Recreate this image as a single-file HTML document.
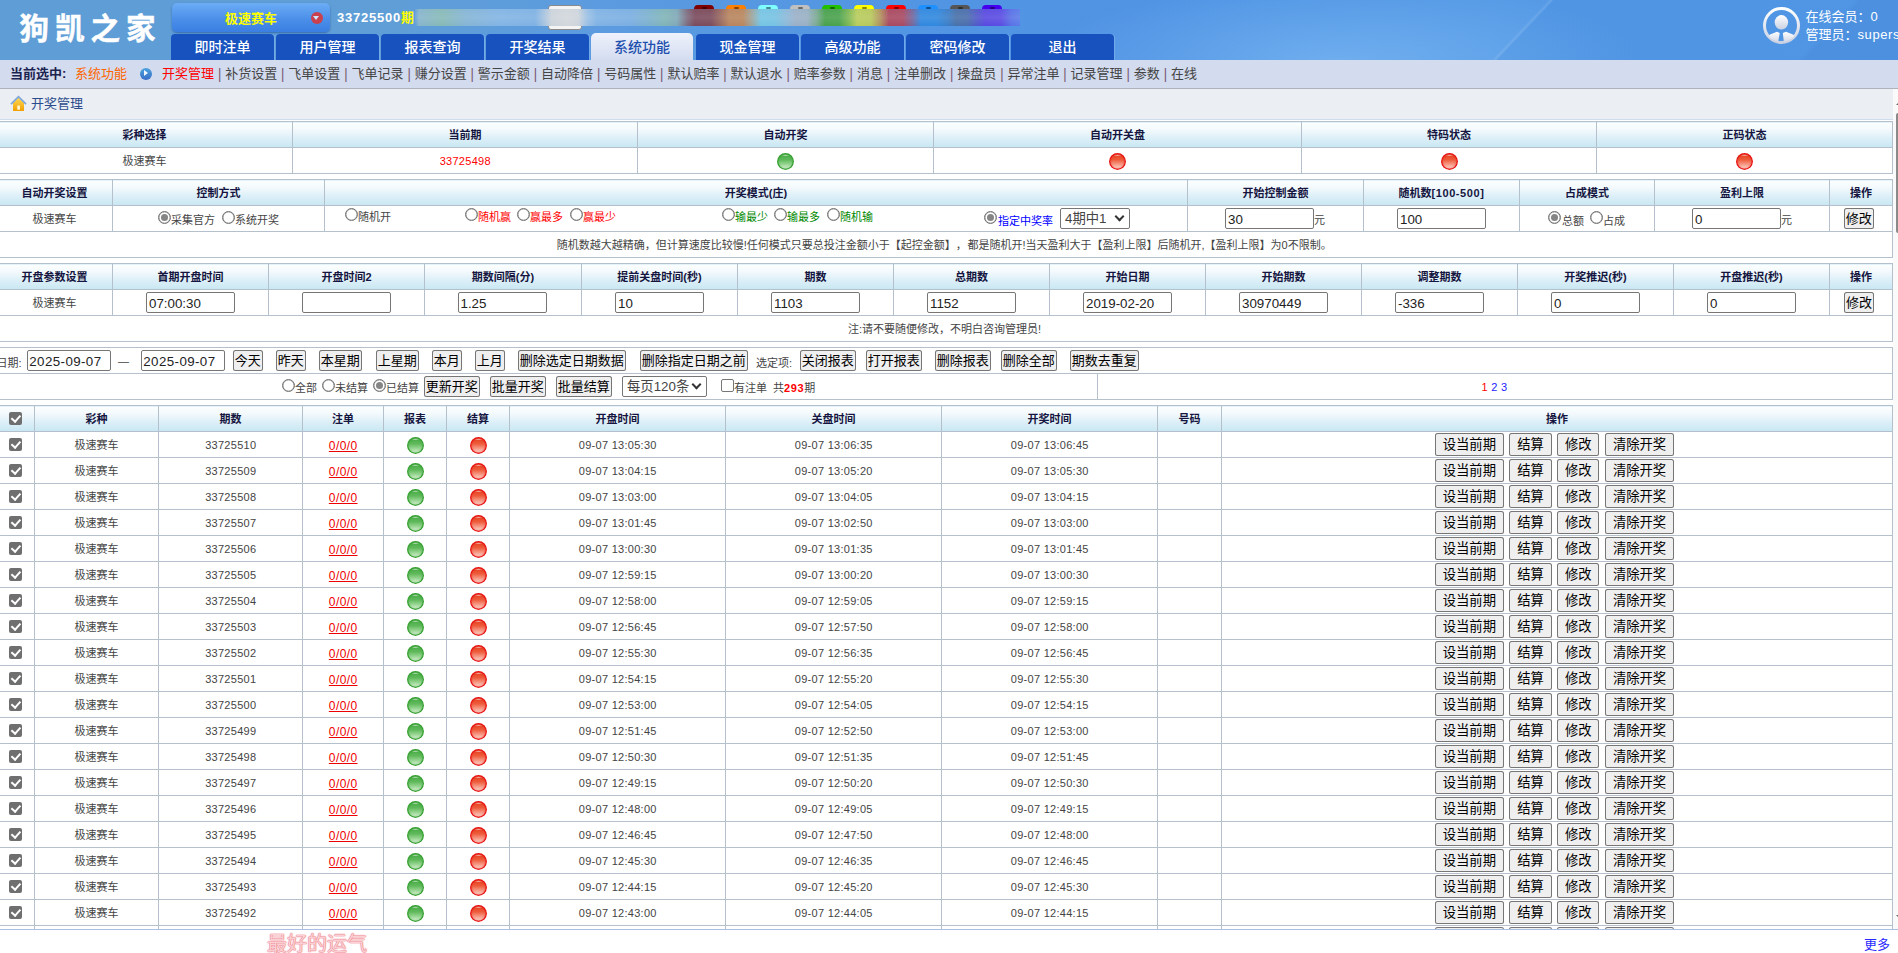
<!DOCTYPE html>
<html lang="zh-CN"><head><meta charset="utf-8"><title>开奖管理</title>
<style>
*{box-sizing:border-box}
html,body{margin:0;padding:0}
body{width:1898px;height:953px;overflow:hidden;position:relative;background:#fff;
 font-family:"Liberation Sans","Noto Sans CJK SC",sans-serif;font-size:11px;color:#444;text-spacing-trim:space-all}
.abs{position:absolute}
/* ---------- header ---------- */
#hdr{position:absolute;left:0;top:0;width:1898px;height:60px;overflow:hidden;
 background:
  linear-gradient(133.5deg,rgba(255,255,255,0) 0,rgba(255,255,255,.03) 1123px,rgba(255,255,255,.13) 1125.5px,rgba(0,40,120,.02) 1127.5px,rgba(0,40,120,.02) 1345px,rgba(0,40,140,.07) 1350px,rgba(0,40,140,.07) 100%),
  radial-gradient(ellipse 300px 80px at 1340px 62px,rgba(135,195,248,.5),rgba(135,195,248,0)),
  linear-gradient(90deg,#5e9dd6 0,#5e9dd6 380px,#5a9adf 600px,#5094e2 850px,#4c91e3 1150px,#5197e5 1500px,#5298e6 1898px)}
#logo{position:absolute;left:19.5px;top:9px;font-size:29.5px;line-height:40px;font-weight:700;color:#fff;letter-spacing:6px;-webkit-text-stroke:.5px #fff;white-space:nowrap}
#gsel{position:absolute;left:172px;top:3px;width:158px;height:29px;border-radius:5px;
 background:linear-gradient(#6cadf5,#4b8fe9 55%,#3a7fe2);box-shadow:0 1px 2px rgba(0,40,120,.45)}
#gsel b{position:absolute;left:53px;top:6.5px;font-size:13px;line-height:18px;color:#ff0;font-weight:bold;white-space:nowrap}
#gsel i{position:absolute;left:139px;top:8.5px;width:12px;height:12px;border-radius:50%;background:#c9404f}
#gsel i:after{content:"";position:absolute;left:2.3px;top:4.3px;border:3.7px solid transparent;border-top:4.4px solid #cfe6ff;border-bottom:0}
#qi{position:absolute;left:337px;top:9.3px;font-size:13px;line-height:18px;font-weight:bold;color:#fff;white-space:nowrap;letter-spacing:.77px}
#qi span{color:#ff0}
.tab{position:absolute;top:34px;width:103px;height:26px;background:#1752bf;border-radius:4px 4px 0 0;color:#fff;font-size:14px;line-height:27px;text-align:center;font-weight:500;
 box-shadow:1px 0 0 rgba(120,175,235,.8)}
.tab.on{background:linear-gradient(#eef2fc,#d4dcf0);color:#1c4fae;top:33px;height:27px;width:102px;line-height:29px;border-radius:5px 5px 0 0;box-shadow:none}
#usr{position:absolute;left:1805.5px;top:7.6px;color:#fff;font-size:13px;line-height:18px;white-space:nowrap}
/* ---------- subnav ---------- */
#sub{position:absolute;left:0;top:60px;width:1898px;height:29px;background:#d3dbee;border-bottom:1px solid #aeb2ba;font-size:13px;line-height:28px;color:#444;white-space:nowrap}
#sub .cur{position:absolute;left:10px;top:0;font-weight:bold;color:#1b2350}
#sub .cur em{font-style:normal;color:#f60;font-weight:normal;position:absolute;left:65px;top:0}
#sub .arw{position:absolute;left:139.5px;top:7.8px;width:12px;height:12px;border-radius:50%;background:linear-gradient(#4ba2de,#3a6ec6)}
#sub .arw:after{content:"";position:absolute;left:4.6px;top:2.3px;border:3.7px solid transparent;border-left:4.6px solid #f4f8ff;border-right:0}
#sub .lnk{position:absolute;left:162px;top:0}
#sub .lnk b{color:#f00;font-weight:normal}
#sub .lnk s{text-decoration:none;color:#76566e;display:inline-block;width:11.17px;text-align:center;transform:scaleY(1.16)}
/* ---------- content ---------- */
#tbar{position:absolute;left:0;top:89px;width:1893px;height:31px;background:#ebeef2;border-bottom:1px solid #cfdcf0}
#tbar span{position:absolute;left:31px;top:6px;font-size:13px;line-height:18px;color:#2b4c8c}
#tbar svg{position:absolute;left:10px;top:6px}
table{border-collapse:collapse;table-layout:fixed;position:absolute;left:-4px}
td,th{border:1px solid #b5c0cd;padding:0;text-align:center;vertical-align:middle;height:26px;overflow:hidden;white-space:nowrap;font-size:11px;line-height:14px;font-weight:normal;color:#444}
th{background:linear-gradient(#fcfefe 0,#f2f9fc 30%,#def0f8 60%,#c8e7f3 100%);font-weight:bold;color:#15153f}
.n{letter-spacing:.28px;padding-left:.5px}
.red{color:#f00}
/* form controls */
.inp{display:inline-block;width:89px;height:21px;border:1px solid #767676;border-radius:2px;background:#fff;font-size:13.33px;line-height:19px;text-align:left;padding:1px 0 0 2px;color:#222;vertical-align:middle}
.btn,button{display:inline-block;font-family:inherit;font-size:13px;line-height:20px;height:21px;padding:1px 0 0;border:0;box-shadow:inset 0 0 0 1px #767676;border-radius:2.5px;background:#efefef;color:#000;vertical-align:middle;margin:0;white-space:nowrap;text-align:center}
.sel{display:inline-block;position:relative;height:21px;border:1px solid #767676;border-radius:2px;background:#fff;font-size:13.33px;line-height:19px;text-align:left;padding-left:4px;color:#444;vertical-align:middle}
.sel:after{content:"";position:absolute;right:6px;top:4px;width:5px;height:5px;border-right:2px solid #333;border-bottom:2px solid #333;transform:rotate(45deg)}
.rd{display:inline-block;width:13px;height:13px;border:1px solid #707070;box-shadow:inset 0 0 0 .35px #767676;border-radius:50%;background:#fff;vertical-align:middle;position:relative}
.rd.on:after{content:"";position:absolute;left:2px;top:2px;width:7px;height:7px;border-radius:50%;background:#858585}
.cb{display:inline-block;width:13px;height:13px;border-radius:2px;background:#6f6f6f;vertical-align:middle;position:relative;top:-1px}
.cb:after{content:"";position:absolute;left:4px;top:1.5px;width:3.5px;height:7px;border:solid #fff;border-width:0 2px 2px 0;transform:rotate(42deg)}
.cb.off{background:#fff;border:1px solid #767676}
.cb.off:after{display:none}
.ball{display:inline-block;width:17px;height:17px;border-radius:50%;vertical-align:middle;position:relative;top:1.2px}
.ball.g{background:radial-gradient(ellipse 4.5px 1.2px at 50% 13%,rgba(255,255,255,.75),rgba(255,255,255,0)),linear-gradient(#4aad47 8%,#5fb95b 40%,#9ad795 68%,#e2f5de 94%);box-shadow:inset 0 0 0 1.2px #37a032,inset 0 0 2px 1.5px rgba(55,160,50,.55)}
.ball.r{background:radial-gradient(ellipse 4.5px 1.2px at 50% 13%,rgba(255,255,255,.75),rgba(255,255,255,0)),linear-gradient(#e6431f 8%,#ee5c3c 40%,#f79c88 68%,#fde2da 94%);box-shadow:inset 0 0 0 1.2px #e81212,inset 0 0 2px 1.5px rgba(232,18,18,.55)}
.pos{position:absolute;white-space:nowrap}
/* data table */
#t5 td{height:26px}
#t5 .op{padding-right:5.2px}
#t5 .op button{height:23px;line-height:22px;padding:0;font-size:13.33px;margin:0 0 0 5.3px;width:42.4px}
#t5 .op button:first-child{width:69.6px;margin-left:0}
#t5 .op button:last-child{width:69.5px}
.zd{color:#e00;text-decoration:underline;font-size:12px;letter-spacing:.4px;position:relative;top:1.2px;left:.2px}
#foot{position:absolute;left:0;top:929px;width:1898px;height:24px;background:#fff;border-top:1px solid #aabfe4}
#foot .luck{position:absolute;left:267px;top:2px;font-size:20px;line-height:24px;color:#fad0d4;white-space:nowrap;text-shadow:0 0 1px #ec7482,0 0 1px #ec7482,0 0 1.5px #f09aa4}
#foot .more{position:absolute;left:1864px;top:6.3px;font-size:13px;line-height:18px;color:#2a2aff}
#sb{position:absolute;left:1893px;top:89px;width:5px;height:841px;background:#fafafa}
#sb i{position:absolute;left:3px;top:24px;width:4px;height:120px;background:#8a8a8a;border-radius:3px}
#sb:before{content:"";position:absolute;left:2.5px;top:12px;border:4px solid transparent;border-bottom:4px solid #666;border-top:0}
#sb:after{content:"";position:absolute;left:2.5px;top:826px;border:4px solid transparent;border-top:4px solid #666;border-bottom:0}

#blur{position:absolute;left:415px;top:9px;width:605px;height:17px;background:linear-gradient(rgba(255,255,255,.04),rgba(255,255,255,.1) 50%,rgba(255,255,255,0)),linear-gradient(90deg,rgba(120,170,215,0) 0px,#86b4cc 4px,#86b9b6 27px,#84b4d4 50px,#82b4e4 85px,#7eb1e3 120px,#a0c0e0 128px,#ccd3da 137px,#d2d7dc 152px,#cdd4db 163px,#9cc0e4 172px,#7fb2e4 182px,#7aaee2 215px,#7cb1cc 235px,#80b4b6 250px,#7fa8b8 262px,#7c6c80 272px,#7a4a5c 280px,#7c4c5c 296px,#9a6a5e 306px,#b8845e 314px,#b8865e 328px,#98a8a4 338px,#74c4e4 346px,#76c2e2 360px,#8cb8d8 372px,#9ab0c8 380px,#98b0c4 392px,#78a890 402px,#48a04c 410px,#4aa24e 424px,#80b854 434px,#b8cc5c 442px,#b6c85c 456px,#b08c5c 466px,#a84860 474px,#a84a62 488px,#7068a0 498px,#3088e0 506px,#3088de 522px,#3c7cc4 534px,#4870a8 541px,#4a6eac 552px,#5058c8 562px,#5848e0 570px,#5a4ce2 586px,#5870e6 596px,#5a7ce8 605px)}
.ct{position:absolute;top:5px;width:20px;height:10px;border-radius:4px 4px 0 0}
.ct:after{content:"";position:absolute;left:8px;top:2px;width:5px;height:2px;background:rgba(0,0,0,.45);border-radius:1px}
#wb{position:absolute;left:548px;top:5px;width:34px;height:25px;border:1px solid #8a8a8a;border-radius:3px;background:#f4f4f4}

</style></head>
<body>
<div id="hdr">
 <div id="logo">狗凯之家</div>
 <i id="wb"></i><i class="ct" style="left:693.5px;background:#800000"></i><i class="ct" style="left:725.5px;background:#ff7f00"></i><i class="ct" style="left:757.5px;background:#7fffff"></i><i class="ct" style="left:789.5px;background:#c0c0c0"></i><i class="ct" style="left:821.5px;background:#22c000"></i><i class="ct" style="left:853.5px;background:#ffff00"></i><i class="ct" style="left:885.5px;background:#ff0000"></i><i class="ct" style="left:917.5px;background:#1e90ff"></i><i class="ct" style="left:949.5px;background:#555555"></i><i class="ct" style="left:981.5px;background:#4400ee"></i>
 <div id="blur"></div>
 <div id="gsel"><b>极速赛车</b><i></i></div>
 <div id="qi">33725500<span>期</span></div>
 <div class="tab" style="left:171px">即时注单</div>
 <div class="tab" style="left:276px">用户管理</div>
 <div class="tab" style="left:381px">报表查询</div>
 <div class="tab" style="left:486px">开奖结果</div>
 <div class="tab on" style="left:591px">系统功能</div>
 <div class="tab" style="left:696px">现金管理</div>
 <div class="tab" style="left:801px">高级功能</div>
 <div class="tab" style="left:906px">密码修改</div>
 <div class="tab" style="left:1011px">退出</div>
 <svg id="ava" class="abs" style="left:1762px;top:6px" width="39" height="39" viewBox="0 0 39 39">
  <defs><linearGradient id="ag" x1="0" y1="0" x2="0" y2="1"><stop offset="0" stop-color="#fff"/><stop offset="1" stop-color="#c9d0e2"/></linearGradient>
  <clipPath id="ac"><circle cx="19.5" cy="19.5" r="16.5"/></clipPath></defs>
  <circle cx="19.5" cy="19.5" r="17" fill="none" stroke="url(#ag)" stroke-width="3"/>
  <ellipse cx="19.4" cy="16.3" rx="6.7" ry="7.2" fill="url(#ag)"/>
  <g clip-path="url(#ac)"><path d="M3 38 L5 31 L8 28.5 L15 25.8 L17.8 27 L15.7 38 Z M36 38 L34 31 L31 28.5 L24 25.8 L20.8 27 L22.1 38 Z" fill="url(#ag)"/></g>
 </svg>
 <div id="usr">在线会员：0<br>管理员：<span style="letter-spacing:.6px">supers</span></div>
</div>
<div id="sub">
 <span class="cur">当前选中:<em>系统功能</em></span>
 <i class="arw"></i>
 <span class="lnk"><b>开奖管理</b><s>|</s>补货设置<s>|</s>飞单设置<s>|</s>飞单记录<s>|</s>赚分设置<s>|</s>警示金额<s>|</s>自动降倍<s>|</s>号码属性<s>|</s>默认赔率<s>|</s>默认退水<s>|</s>赔率参数<s>|</s>消息<s>|</s>注单删改<s>|</s>操盘员<s>|</s>异常注单<s>|</s>记录管理<s>|</s>参数<s>|</s>在线</span>
</div>
<div id="tbar">
 <svg width="17" height="17" viewBox="0 0 17 17">
  <defs><linearGradient id="hg" x1="0" y1="0" x2="0" y2="1"><stop offset="0" stop-color="#ffd95a"/><stop offset="1" stop-color="#f0a000"/></linearGradient></defs>
  <path d="M3 8 L8.5 2.5 L14 8 L14 16 L3 16 Z" fill="url(#hg)"/>
  <path d="M1 9.2 L8.5 1.6 L16 9.2" fill="none" stroke="#7fa7d8" stroke-width="1.7" stroke-linejoin="miter"/>
  <rect x="7.3" y="10.5" width="2.6" height="4.2" fill="#fff7d8"/>
 </svg>
 <span>开奖管理</span>
</div>

<table id="t1" style="top:121px;width:1896px">
 <colgroup><col style="width:296px"><col style="width:345px"><col style="width:296px"><col style="width:368px"><col style="width:295px"><col style="width:296px"></colgroup>
 <tr><th>彩种选择</th><th>当前期</th><th>自动开奖</th><th>自动开关盘</th><th>特码状态</th><th>正码状态</th></tr>
 <tr><td>极速赛车</td><td class="red n">33725498</td><td><i class="ball g"></i></td><td><i class="ball r"></i></td><td><i class="ball r"></i></td><td><i class="ball r"></i></td></tr>
</table>

<table id="t2" style="top:179px;width:1896px">
 <colgroup><col style="width:116px"><col style="width:212px"><col style="width:863px"><col style="width:176px"><col style="width:156px"><col style="width:135px"><col style="width:175px"><col style="width:63px"></colgroup>
 <tr><th>自动开奖设置</th><th>控制方式</th><th>开奖模式(庄)</th><th>开始控制金额</th><th>随机数<span style="letter-spacing:.6px">[100-500]</span></th><th>占成模式</th><th>盈利上限</th><th>操作</th></tr>
 <tr><td>极速赛车</td><td></td><td></td><td></td><td></td><td></td><td></td><td></td></tr>
 <tr><td colspan="8" style="text-align:left"><span style="position:relative;left:559.8px">随机数越大越精确，但计算速度比较慢!任何模式只要总投注金额小于【起控金额】，<i style="margin-left:.6px"></i>都是随机开!当天盈利大于【盈利上限】后随机开,【盈利上限】为0不限制。</span></td></tr>
</table>
<!-- t2 controls -->
<i class="rd on pos" style="left:158px;top:211px"></i><span class="pos" style="left:171px;top:211px">采集官方</span>
<i class="rd pos" style="left:222px;top:211px"></i><span class="pos" style="left:235px;top:211px">系统开奖</span>
<i class="rd pos" style="left:345px;top:208px"></i><span class="pos" style="left:358px;top:208px">随机开</span>
<i class="rd pos" style="left:465px;top:208px"></i><span class="pos red" style="left:478px;top:208px">随机赢</span>
<i class="rd pos" style="left:517px;top:208px"></i><span class="pos red" style="left:530px;top:208px">赢最多</span>
<i class="rd pos" style="left:570px;top:208px"></i><span class="pos red" style="left:583px;top:208px">赢最少</span>
<i class="rd pos" style="left:722px;top:208px"></i><span class="pos" style="left:735px;top:208px;color:#080">输最少</span>
<i class="rd pos" style="left:774px;top:208px"></i><span class="pos" style="left:787px;top:208px;color:#080">输最多</span>
<i class="rd pos" style="left:827px;top:208px"></i><span class="pos" style="left:840px;top:208px;color:#080">随机输</span>
<i class="rd on pos" style="left:984px;top:211px"></i><span class="pos" style="left:998px;top:212px;color:#00f">指定中奖率</span>
<span class="sel pos" style="left:1060px;top:208px;width:70px">4期中1</span>
<span class="inp pos" style="left:1225px;top:208px">30</span><span class="pos" style="left:1314px;top:211px">元</span>
<span class="inp pos" style="left:1397px;top:208px">100</span>
<i class="rd on pos" style="left:1548px;top:211px"></i><span class="pos" style="left:1562px;top:212px">总额</span>
<i class="rd pos" style="left:1590px;top:211px"></i><span class="pos" style="left:1603px;top:212px">占成</span>
<span class="inp pos" style="left:1692px;top:208px">0</span><span class="pos" style="left:1781px;top:211px">元</span>
<span class="btn pos" style="left:1844px;top:208px;width:29.5px">修改</span>

<table id="t3" style="top:263px;width:1896px">
 <colgroup><col style="width:116px"><col style="width:156px"><col style="width:156px"><col style="width:157px"><col style="width:156px"><col style="width:156px"><col style="width:156px"><col style="width:156px"><col style="width:156px"><col style="width:156px"><col style="width:156px"><col style="width:156px"><col style="width:63px"></colgroup>
 <tr><th>开盘参数设置</th><th>首期开盘时间</th><th>开盘时间2</th><th>期数间隔(分)</th><th>提前关盘时间(秒)</th><th>期数</th><th>总期数</th><th>开始日期</th><th>开始期数</th><th>调整期数</th><th>开奖推迟(秒)</th><th>开盘推迟(秒)</th><th>操作</th></tr>
 <tr><td>极速赛车</td><td><span class="inp">07:00:30</span></td><td><span class="inp">&nbsp;</span></td><td style="padding-right:2px"><span class="inp">1.25</span></td><td><span class="inp">10</span></td><td><span class="inp">1103</span></td><td><span class="inp">1152</span></td><td><span class="inp">2019-02-20</span></td><td><span class="inp">30970449</span></td><td><span class="inp">-336</span></td><td><span class="inp">0</span></td><td><span class="inp">0</span></td><td style="padding-right:4px"><span class="btn" style="width:29.5px">修改</span></td></tr>
 <tr><td colspan="13">注:请不要随便修改，不明白咨询管理员!</td></tr>
</table>

<table id="t4" style="top:347px;width:1896px">
 <colgroup><col style="width:1101px"><col style="width:795px"></colgroup>
 <tr><td colspan="2"></td></tr>
 <tr><td></td><td></td></tr>
</table>
<!-- t4 controls -->
<span class="pos" style="left:-3.5px;top:354px">日期:</span>
<span class="inp pos" style="left:27px;top:350px;width:84px;letter-spacing:.4px;padding-left:1.3px">2025-09-07</span>
<span class="pos" style="left:118px;top:355px">—</span>
<span class="inp pos" style="left:141px;top:350px;width:84px;letter-spacing:.4px;padding-left:1.3px">2025-09-07</span>
<span class="btn pos" style="left:233px;top:350px;width:29.5px">今天</span>
<span class="btn pos" style="left:276px;top:350px;width:29.5px">昨天</span>
<span class="btn pos" style="left:319px;top:350px;width:42.5px">本星期</span>
<span class="btn pos" style="left:376px;top:350px;width:42.5px">上星期</span>
<span class="btn pos" style="left:432px;top:350px;width:29.5px">本月</span>
<span class="btn pos" style="left:475px;top:350px;width:29.5px">上月</span>
<span class="btn pos" style="left:518px;top:350px;width:107.5px">删除选定日期数据</span>
<span class="btn pos" style="left:640px;top:350px;width:107.5px">删除指定日期之前</span>
<span class="pos" style="left:756px;top:353.5px">选定项:</span>
<span class="btn pos" style="left:800px;top:350px;width:55.5px">关闭报表</span>
<span class="btn pos" style="left:866px;top:350px;width:55.5px">打开报表</span>
<span class="btn pos" style="left:935px;top:350px;width:55.5px">删除报表</span>
<span class="btn pos" style="left:1001px;top:350px;width:55.5px">删除全部</span>
<span class="btn pos" style="left:1070px;top:350px;width:68.5px">期数去重复</span>

<i class="rd pos" style="left:282px;top:379px"></i><span class="pos" style="left:295px;top:379px">全部</span>
<i class="rd pos" style="left:322px;top:379px"></i><span class="pos" style="left:335px;top:379px">未结算</span>
<i class="rd on pos" style="left:373px;top:379px"></i><span class="pos" style="left:386px;top:379px">已结算</span>
<span class="btn pos" style="left:424px;top:376px;width:55.5px">更新开奖</span>
<span class="btn pos" style="left:490px;top:376px;width:55.5px">批量开奖</span>
<span class="btn pos" style="left:556px;top:376px;width:55.5px">批量结算</span>
<span class="sel pos" style="left:622px;top:376px;width:84.5px">每页120条</span>
<i class="cb off pos" style="left:721px;top:379px"></i><span class="pos" style="left:734px;top:379px">有注单</span>
<span class="pos" style="left:773px;top:379px">共<b class="red" style="letter-spacing:.6px">293</b>期</span>
<span class="pos n" style="left:1481px;top:380.6px"><span class="red">1</span> <span style="color:#22f">2</span> <span style="color:#22f">3</span></span>

<div id="frame" style="position:absolute;left:0;top:405px;width:1893px;height:524px;overflow:hidden">
<table id="t5" style="top:0;width:1896px">
 <colgroup><col style="width:38px"><col style="width:124px"><col style="width:144px"><col style="width:81px"><col style="width:63px"><col style="width:63px"><col style="width:216px"><col style="width:216px"><col style="width:216px"><col style="width:64px"><col style="width:671px"></colgroup>
 <tr><th><i class="cb"></i></th><th>彩种</th><th>期数</th><th>注单</th><th>报表</th><th>结算</th><th>开盘时间</th><th>关盘时间</th><th>开奖时间</th><th>号码</th><th>操作</th></tr>
<tr><td><i class="cb"></i></td><td>极速赛车</td><td class="n">33725510</td><td><a class="zd">0/0/0</a></td><td><i class="ball g"></i></td><td><i class="ball r"></i></td><td class="n">09-07 13:05:30</td><td class="n">09-07 13:06:35</td><td class="n">09-07 13:06:45</td><td></td><td class="op"><button>设当前期</button><button>结算</button><button>修改</button><button>清除开奖</button></td></tr>
<tr><td><i class="cb"></i></td><td>极速赛车</td><td class="n">33725509</td><td><a class="zd">0/0/0</a></td><td><i class="ball g"></i></td><td><i class="ball r"></i></td><td class="n">09-07 13:04:15</td><td class="n">09-07 13:05:20</td><td class="n">09-07 13:05:30</td><td></td><td class="op"><button>设当前期</button><button>结算</button><button>修改</button><button>清除开奖</button></td></tr>
<tr><td><i class="cb"></i></td><td>极速赛车</td><td class="n">33725508</td><td><a class="zd">0/0/0</a></td><td><i class="ball g"></i></td><td><i class="ball r"></i></td><td class="n">09-07 13:03:00</td><td class="n">09-07 13:04:05</td><td class="n">09-07 13:04:15</td><td></td><td class="op"><button>设当前期</button><button>结算</button><button>修改</button><button>清除开奖</button></td></tr>
<tr><td><i class="cb"></i></td><td>极速赛车</td><td class="n">33725507</td><td><a class="zd">0/0/0</a></td><td><i class="ball g"></i></td><td><i class="ball r"></i></td><td class="n">09-07 13:01:45</td><td class="n">09-07 13:02:50</td><td class="n">09-07 13:03:00</td><td></td><td class="op"><button>设当前期</button><button>结算</button><button>修改</button><button>清除开奖</button></td></tr>
<tr><td><i class="cb"></i></td><td>极速赛车</td><td class="n">33725506</td><td><a class="zd">0/0/0</a></td><td><i class="ball g"></i></td><td><i class="ball r"></i></td><td class="n">09-07 13:00:30</td><td class="n">09-07 13:01:35</td><td class="n">09-07 13:01:45</td><td></td><td class="op"><button>设当前期</button><button>结算</button><button>修改</button><button>清除开奖</button></td></tr>
<tr><td><i class="cb"></i></td><td>极速赛车</td><td class="n">33725505</td><td><a class="zd">0/0/0</a></td><td><i class="ball g"></i></td><td><i class="ball r"></i></td><td class="n">09-07 12:59:15</td><td class="n">09-07 13:00:20</td><td class="n">09-07 13:00:30</td><td></td><td class="op"><button>设当前期</button><button>结算</button><button>修改</button><button>清除开奖</button></td></tr>
<tr><td><i class="cb"></i></td><td>极速赛车</td><td class="n">33725504</td><td><a class="zd">0/0/0</a></td><td><i class="ball g"></i></td><td><i class="ball r"></i></td><td class="n">09-07 12:58:00</td><td class="n">09-07 12:59:05</td><td class="n">09-07 12:59:15</td><td></td><td class="op"><button>设当前期</button><button>结算</button><button>修改</button><button>清除开奖</button></td></tr>
<tr><td><i class="cb"></i></td><td>极速赛车</td><td class="n">33725503</td><td><a class="zd">0/0/0</a></td><td><i class="ball g"></i></td><td><i class="ball r"></i></td><td class="n">09-07 12:56:45</td><td class="n">09-07 12:57:50</td><td class="n">09-07 12:58:00</td><td></td><td class="op"><button>设当前期</button><button>结算</button><button>修改</button><button>清除开奖</button></td></tr>
<tr><td><i class="cb"></i></td><td>极速赛车</td><td class="n">33725502</td><td><a class="zd">0/0/0</a></td><td><i class="ball g"></i></td><td><i class="ball r"></i></td><td class="n">09-07 12:55:30</td><td class="n">09-07 12:56:35</td><td class="n">09-07 12:56:45</td><td></td><td class="op"><button>设当前期</button><button>结算</button><button>修改</button><button>清除开奖</button></td></tr>
<tr><td><i class="cb"></i></td><td>极速赛车</td><td class="n">33725501</td><td><a class="zd">0/0/0</a></td><td><i class="ball g"></i></td><td><i class="ball r"></i></td><td class="n">09-07 12:54:15</td><td class="n">09-07 12:55:20</td><td class="n">09-07 12:55:30</td><td></td><td class="op"><button>设当前期</button><button>结算</button><button>修改</button><button>清除开奖</button></td></tr>
<tr><td><i class="cb"></i></td><td>极速赛车</td><td class="n">33725500</td><td><a class="zd">0/0/0</a></td><td><i class="ball g"></i></td><td><i class="ball r"></i></td><td class="n">09-07 12:53:00</td><td class="n">09-07 12:54:05</td><td class="n">09-07 12:54:15</td><td></td><td class="op"><button>设当前期</button><button>结算</button><button>修改</button><button>清除开奖</button></td></tr>
<tr><td><i class="cb"></i></td><td>极速赛车</td><td class="n">33725499</td><td><a class="zd">0/0/0</a></td><td><i class="ball g"></i></td><td><i class="ball r"></i></td><td class="n">09-07 12:51:45</td><td class="n">09-07 12:52:50</td><td class="n">09-07 12:53:00</td><td></td><td class="op"><button>设当前期</button><button>结算</button><button>修改</button><button>清除开奖</button></td></tr>
<tr><td><i class="cb"></i></td><td>极速赛车</td><td class="n">33725498</td><td><a class="zd">0/0/0</a></td><td><i class="ball g"></i></td><td><i class="ball r"></i></td><td class="n">09-07 12:50:30</td><td class="n">09-07 12:51:35</td><td class="n">09-07 12:51:45</td><td></td><td class="op"><button>设当前期</button><button>结算</button><button>修改</button><button>清除开奖</button></td></tr>
<tr><td><i class="cb"></i></td><td>极速赛车</td><td class="n">33725497</td><td><a class="zd">0/0/0</a></td><td><i class="ball g"></i></td><td><i class="ball r"></i></td><td class="n">09-07 12:49:15</td><td class="n">09-07 12:50:20</td><td class="n">09-07 12:50:30</td><td></td><td class="op"><button>设当前期</button><button>结算</button><button>修改</button><button>清除开奖</button></td></tr>
<tr><td><i class="cb"></i></td><td>极速赛车</td><td class="n">33725496</td><td><a class="zd">0/0/0</a></td><td><i class="ball g"></i></td><td><i class="ball r"></i></td><td class="n">09-07 12:48:00</td><td class="n">09-07 12:49:05</td><td class="n">09-07 12:49:15</td><td></td><td class="op"><button>设当前期</button><button>结算</button><button>修改</button><button>清除开奖</button></td></tr>
<tr><td><i class="cb"></i></td><td>极速赛车</td><td class="n">33725495</td><td><a class="zd">0/0/0</a></td><td><i class="ball g"></i></td><td><i class="ball r"></i></td><td class="n">09-07 12:46:45</td><td class="n">09-07 12:47:50</td><td class="n">09-07 12:48:00</td><td></td><td class="op"><button>设当前期</button><button>结算</button><button>修改</button><button>清除开奖</button></td></tr>
<tr><td><i class="cb"></i></td><td>极速赛车</td><td class="n">33725494</td><td><a class="zd">0/0/0</a></td><td><i class="ball g"></i></td><td><i class="ball r"></i></td><td class="n">09-07 12:45:30</td><td class="n">09-07 12:46:35</td><td class="n">09-07 12:46:45</td><td></td><td class="op"><button>设当前期</button><button>结算</button><button>修改</button><button>清除开奖</button></td></tr>
<tr><td><i class="cb"></i></td><td>极速赛车</td><td class="n">33725493</td><td><a class="zd">0/0/0</a></td><td><i class="ball g"></i></td><td><i class="ball r"></i></td><td class="n">09-07 12:44:15</td><td class="n">09-07 12:45:20</td><td class="n">09-07 12:45:30</td><td></td><td class="op"><button>设当前期</button><button>结算</button><button>修改</button><button>清除开奖</button></td></tr>
<tr><td><i class="cb"></i></td><td>极速赛车</td><td class="n">33725492</td><td><a class="zd">0/0/0</a></td><td><i class="ball g"></i></td><td><i class="ball r"></i></td><td class="n">09-07 12:43:00</td><td class="n">09-07 12:44:05</td><td class="n">09-07 12:44:15</td><td></td><td class="op"><button>设当前期</button><button>结算</button><button>修改</button><button>清除开奖</button></td></tr>
<tr><td><i class="cb"></i></td><td>极速赛车</td><td class="n">33725491</td><td><a class="zd">0/0/0</a></td><td><i class="ball g"></i></td><td><i class="ball r"></i></td><td class="n">09-07 12:41:45</td><td class="n">09-07 12:42:50</td><td class="n">09-07 12:43:00</td><td></td><td class="op"><button>设当前期</button><button>结算</button><button>修改</button><button>清除开奖</button></td></tr>
</table>
</div>
<div id="sb"><i></i></div>
<div id="foot"><span class="luck">最好的运气</span><span class="more">更多</span></div>

</body></html>
